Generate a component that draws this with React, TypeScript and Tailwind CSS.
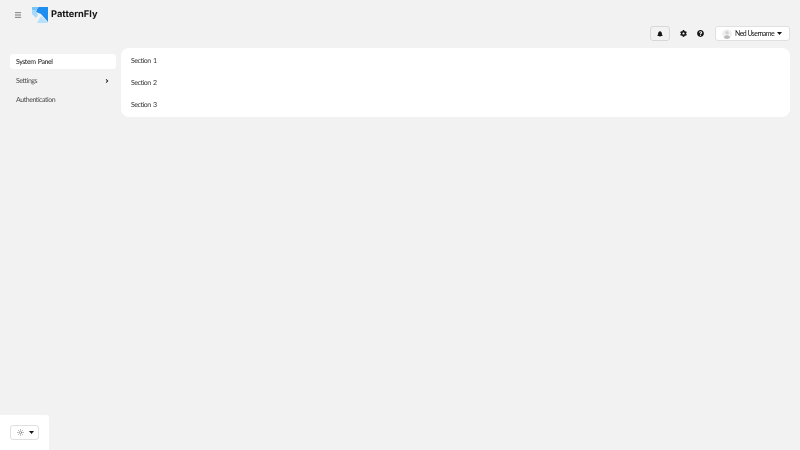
import React from 'react';
import { Menu, Sun } from 'lucide-react';
import { FaAngleRight, FaBell, FaCog, FaQuestionCircle } from 'react-icons/fa';

const Caret = () => (
  <svg className="w-[5px] h-[3px] shrink-0 text-[#151515]" viewBox="0 0 10 6" fill="currentColor">
    <path d="M0 0h10L5 6z" />
  </svg>
);

const Logo = () => (
  <svg className="w-[16px] h-[16px]" viewBox="0 0 16 16">
    <path d="M6 0h10v15L9 7 4 5z" fill="#1e8ff0" />
    <path d="M0 0h7L3.5 4 0 3z" fill="#7cc4f8" />
    <path d="M0 3l3.5 1L6 8 4 11 0 7z" fill="#a8d8fb" />
    <path d="M5 16l4-7 7 7z" fill="#b6e0fc" />
  </svg>
);

const Avatar = () => (
  <svg className="w-[10px] h-[10px] shrink-0 rounded-full" viewBox="0 0 20 20">
    <circle cx="10" cy="10" r="10" fill="#f0f0f0" />
    <circle cx="10" cy="7.5" r="3.6" fill="#d2d2d2" />
    <path d="M3.5 20c0-5 3-7.5 6.5-7.5s6.5 2.5 6.5 7.5z" fill="#b8bbbe" />
  </svg>
);

export default function App() {
  return (
    <div className="relative h-[450px] overflow-hidden bg-[#f2f2f2] text-[7px] tracking-[-0.45px] [word-spacing:1px] text-[#151515] font-['Lato',sans-serif] [text-rendering:geometricPrecision]">
      <header className="flex items-center h-[30px] pl-[14px]">
        <Menu className="w-[8px] h-[8px] mr-[10px]" strokeWidth={1.6} />
        <div className="flex items-center gap-[3px] will-change-transform">
          <Logo />
          <span className="text-[9.3px] tracking-normal font-bold font-['Inter',sans-serif]">PatternFly</span>
        </div>
      </header>

      <div className="flex justify-end items-center h-[15px] mt-[-4px] pr-[10px]">
        <button className="flex items-center justify-center w-[20px] h-[15px] rounded-[3px] border border-[#d8d8d8] bg-[#f2f2f2]">
          <FaBell className="w-[6px] h-[6px]" />
        </button>
        <FaCog className="w-[7px] h-[7px] ml-[10px]" />
        <FaQuestionCircle className="w-[7px] h-[7px] ml-[10px]" />
        <button className="flex items-center w-[75px] h-[15px] ml-[11px] pl-[6px] rounded-[3px] border border-[#e0e0e0] bg-white">
          <Avatar />
          <span className="ml-[3px] mr-[3px] tracking-[-0.55px] whitespace-nowrap will-change-transform">Ned Username</span>
          <Caret />
        </button>
      </div>

      <div className="flex mt-[7px] px-[10px]">
        <nav className="w-[106px] mr-[5px] pt-[6px] flex flex-col will-change-transform">
          <a className="flex items-center h-[15px] px-[6px] pt-[2px] rounded-[3px] bg-white">System Panel</a>
          <a className="flex items-center justify-between h-[15px] mt-[4px] px-[6px] pt-[2px] rounded-[3px] text-[#4d4d4d]">
            Settings
            <FaAngleRight className="w-[6px] h-[6px] mb-[2px] text-[#151515]" />
          </a>
          <a className="flex items-center h-[15px] mt-[4px] px-[6px] pt-[2px] rounded-[3px] text-[#4d4d4d]">Authentication</a>
        </nav>
        <main className="flex-1 h-[69px] flex flex-col justify-center gap-[14px] px-[10px] rounded-[8px] bg-white text-[#333333] will-change-transform">
          <p className="leading-[8px]">Section 1</p>
          <p className="leading-[8px]">Section 2</p>
          <p className="leading-[8px]">Section 3</p>
        </main>
      </div>

      <div className="absolute left-0 bottom-0 w-[49px] h-[35px] flex items-center pl-[10px] rounded-tr-[3px] bg-white">
        <button className="flex items-center gap-[5px] w-[29px] h-[15px] pl-[6px] rounded-[3px] border border-[#e0e0e0] bg-white">
          <Sun className="w-[7px] h-[7px] text-[#707070]" />
          <Caret />
        </button>
      </div>
    </div>
  );
}
